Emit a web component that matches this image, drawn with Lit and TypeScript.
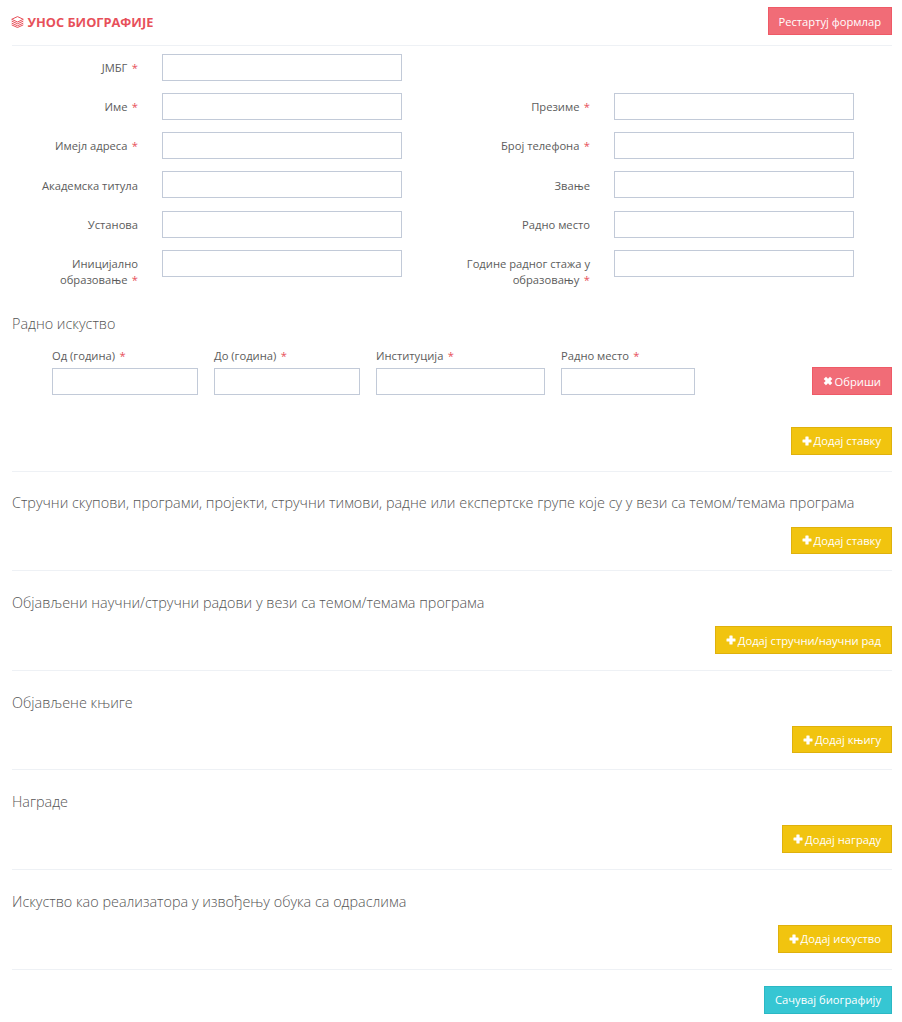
import { LitElement, html, css, svg } from "lit";
import { customElement } from "lit/decorators.js";

const plus = html`<svg class="ico" viewBox="0 0 10 10"><path d="M3.900.5h2.200a.5.5 0 0 1 .5.5V3.400H9a.5.5 0 0 1 .5.5v2.200a.5.5 0 0 1-.5.5H6.600V9a.5.5 0 0 1-.5.5H3.900a.5.5 0 0 1-.5-.5V6.600H1a.5.5 0 0 1-.5-.5V3.900a.5.5 0 0 1 .5-.5H3.400V1a.5.5 0 0 1 .5-.5z" fill="currentColor"/></svg>`;
const times = html`<svg class="ico" viewBox="0 0 10 10"><path d="M.9 3 3 .9 5 2.900 7 .9 9.100 3 7.100 5 9.100 7 7 9.100 5 7.100 3 9.100.9 7 2.900 5z" fill="currentColor" stroke="currentColor" stroke-width=".5" stroke-linejoin="round"/></svg>`;
const layers = html`<svg class="layers" viewBox="0 0 13 12" fill="none" stroke="currentColor" stroke-width="1">${svg`<path d="M6.500.6 12.300 3.300 6.500 6 .7 3.300z"/><path d="M.7 5.100l5.800 2.700 5.800-2.700"/><path d="M.7 7.100l5.800 2.700 5.800-2.700"/><path d="M.7 8.900l5.800 2.600 5.800-2.600"/>`}</svg>`;

const req = html`<span class="req">*</span>`;

@customElement("app-root")
export class AppRoot extends LitElement {
  static styles = css`
    :host {
      display: block;
      width: 902px;
      min-height: 1022px;
      box-sizing: border-box;
      padding: 0 10px 0 12px;
      background: #fff;
      font-family: "Open Sans", sans-serif;
      font-size: 11.2px;
      color: #555;
    }
    * { box-sizing: border-box; }
    .head {
      display: flex;
      justify-content: space-between;
      align-items: center;
      height: 46px;
      padding: 7px 0 10px;
      border-bottom: 1px solid #eef1f5;
    }
    .title {
      display: flex;
      align-items: center;
      gap: 3.500px;
      margin-left: -1px;
      padding-top: 2px;
      color: #e7505a;
      font-size: 12.8px;
      font-weight: 700;
    }
    .layers { width: 13px; height: 12px; }
    .form {
      display: grid;
      grid-template-columns: 126px 240px 164px 240px;
      column-gap: 24px;
      row-gap: 12.05px;
      padding-top: 7.6px;
    }
    .lbl {
      text-align: right;
      line-height: 16px;
      padding-top: 6.4px;
      color: #5c5c5c;
    }
    .req { color: #e7505a; margin-left: 1.500px; }
    input {
      display: block;
      width: 100%;
      height: 27.2px;
      border: 1px solid #c2cad8;
      background: #fff;
      padding: 0 8px;
      outline: none;
    }
    .sec-title {
      font-size: 14.4px;
      font-weight: 300;
      line-height: 21px;
      color: #555;
    }
    .exp { padding-top: 25.2px; border-bottom: 1px solid #eef1f5; padding-bottom: 16px; }
    .exp-row {
      display: flex;
      align-items: flex-end;
      gap: 16px;
      padding-left: 40px;
      margin-top: 13.5px;
    }
    .col label { display: block; line-height: 16px; margin-bottom: 4px; color: #5c5c5c; }
    .c1 { width: 146px; }
    .c2 { width: 169px; }
    .c3 { width: 134px; }
    .del { margin-left: auto; }
    .actions { display: flex; justify-content: flex-end; }
    .exp .actions { margin-top: 32px; }
    .section {
      height: 99.6px;
      padding-top: 20.7px;
      border-bottom: 1px solid #eef1f5;
    }
    .section .actions { margin-top: 13.3px; }
    .save { padding-top: 16.4px; }
    .btn {
      display: inline-flex;
      align-items: center;
      justify-content: center;
      gap: 2px;
      height: 27.6px;
      padding: 0 10px 0 9.6px;
      border: 1px solid;
      font: 400 11.2px "Open Sans", sans-serif;
      color: #fff;
      white-space: nowrap;
    }
    .red { background: #f16c77; border-color: #ef5a66; }
    .yellow { background: #f1c40f; border-color: #dfb10d; }
    .teal { background: #36c6d3; border-color: #2bb8c4; }
    .ico { width: 10px; height: 10px; flex: none; }
  `;

  private sections = [
    ["Стручни скупови, програми, пројекти, стручни тимови, радне или експертске групе које су у вези са темом/темама програма", "Додај ставку"],
    ["Објављени научни/стручни радови у вези са темом/темама програма", "Додај стручни/научни рад"],
    ["Објављене књиге", "Додај књигу"],
    ["Награде", "Додај награду"],
    ["Искуство као реализатора у извођењу обука са одраслима", "Додај искуство"],
  ];

  render() {
    return html`
      <div class="head">
        <div class="title">${layers}<span>УНОС БИОГРАФИЈЕ</span></div>
        <button class="btn red">Рестартуј формлар</button>
      </div>
      <div class="form">
        <div class="lbl">ЈМБГ ${req}</div><input /><div></div><div></div>
        <div class="lbl">Име ${req}</div><input /><div class="lbl">Презиме ${req}</div><input />
        <div class="lbl">Имејл адреса ${req}</div><input /><div class="lbl">Број телефона ${req}</div><input />
        <div class="lbl">Академска титула</div><input /><div class="lbl">Звање</div><input />
        <div class="lbl">Установа</div><input /><div class="lbl">Радно место</div><input />
        <div class="lbl">Иницијално<br />образовање ${req}</div><input />
        <div class="lbl">Године радног стажа у<br />образовању ${req}</div><input />
      </div>
      <div class="exp">
        <div class="sec-title">Радно искуство</div>
        <div class="exp-row">
          <div class="col c1"><label>Од (година) ${req}</label><input /></div>
          <div class="col c1"><label>До (година) ${req}</label><input /></div>
          <div class="col c2"><label>Институција ${req}</label><input /></div>
          <div class="col c3"><label>Радно место ${req}</label><input /></div>
          <button class="btn red del">${times}Обриши</button>
        </div>
        <div class="actions"><button class="btn yellow">${plus}Додај ставку</button></div>
      </div>
      ${this.sections.map(
        ([t, b]) => html`<div class="section">
          <div class="sec-title">${t}</div>
          <div class="actions"><button class="btn yellow">${plus}${b}</button></div>
        </div>`
      )}
      <div class="actions save"><button class="btn teal">Сачувај биографију</button></div>
    `;
  }
}
